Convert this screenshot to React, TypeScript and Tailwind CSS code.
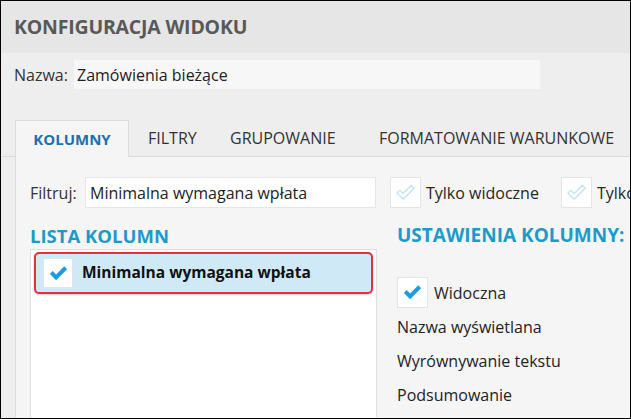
import React from "react";

const CHECK_POINTS = "3,12.5 6,9.5 9.5,13 18,4.5 21,7.5 9.5,19";

const CheckBox = ({ checked, className = "" }: { checked: boolean; className?: string }) => (
  <div
    className={
      "flex shrink-0 items-center justify-center border border-[#e4e4e4] bg-white " + className
    }
  >
    <svg viewBox="0 0 24 24" className="h-[23px] w-[23px]">
      {checked ? (
        <polygon points={CHECK_POINTS} fill="#1b9ce0" />
      ) : (
        <polygon
          points={CHECK_POINTS}
          fill="none"
          stroke="#bfe3f4"
          strokeWidth="1.3"
          strokeLinejoin="round"
        />
      )}
    </svg>
  </div>
);

export default function App() {
  return (
    <div
      className="flex h-[419px] w-[631px] flex-col overflow-hidden border border-black bg-[#eeeeee] text-[#262626]"
      style={{ fontFamily: '"Open Sans", "Noto Sans", sans-serif' }}
    >
      {/* header */}
      <div className="flex h-[52px] shrink-0 items-center bg-[#e6e6e6] px-[13px]">
        <h1 className="whitespace-nowrap text-[19.5px] font-bold tracking-[-0.2px] text-[#595959]">
          KONFIGURACJA WIDOKU
        </h1>
      </div>

      {/* name */}
      <div className="mt-[7px] flex h-[29px] shrink-0 items-center pl-[13px]">
        <span className="w-[60px] shrink-0 text-[16px] text-[#333]">Nazwa:</span>
        <div className="flex h-full w-[466px] shrink-0 items-center bg-[#f7f7f7] px-[3px] text-[16px] text-[#222]">
          Zamówienia bieżące
        </div>
      </div>

      {/* tabs */}
      <div className="mt-[31px] flex h-[37px] shrink-0 items-end whitespace-nowrap border-b border-[#d9d9d9] pl-[14px]">
        <div className="-mb-px flex h-[37px] w-[114px] shrink-0 items-center justify-center border border-b-0 border-[#dcdcdc] bg-[#f5f5f5] text-[15px] font-bold text-[#1b6fb3]">
          KOLUMNY
        </div>
        <div className="flex h-full items-center pl-[19px] text-[16px] text-[#333]">
          <span className="w-[82px] shrink-0">FILTRY</span>
          <span className="w-[149px] shrink-0">GRUPOWANIE</span>
          <span className="shrink-0">FORMATOWANIE WARUNKOWE</span>
        </div>
      </div>

      {/* content */}
      <div className="ml-[14px] flex min-h-0 flex-1 flex-col border-l border-[#dcdcdc] bg-[#f5f5f5] pl-[14px] pt-[20px]">
        <div className="flex h-[31px] shrink-0 items-center whitespace-nowrap">
          <span className="w-[55px] shrink-0 text-[16px] text-[#333]">Filtruj:</span>
          <div className="flex h-full w-[291px] shrink-0 items-center border border-[#e6e6e6] bg-white px-[4px] text-[16px] text-[#222]">
            Minimalna wymagana wpłata
          </div>
          <CheckBox checked={false} className="ml-[14px] h-[31px] w-[31px]" />
          <span className="ml-[5px] shrink-0 text-[16px]">Tylko widoczne</span>
          <CheckBox checked={false} className="ml-[22px] h-[31px] w-[31px]" />
          <span className="ml-[5px] shrink-0 text-[16px]">Tylko zaznaczone</span>
        </div>

        <div className="mt-[14px] flex min-h-0 flex-1">
          {/* list */}
          <div className="flex w-[347px] shrink-0 flex-col">
            <h2 className="h-[27px] whitespace-nowrap text-[18.5px] font-bold leading-[27px] text-[#1c9bc9]">
              LISTA KOLUMN
            </h2>
            <div className="flex-1 border border-b-0 border-[#e0e0e0] bg-white px-[3px] pt-[2px]">
              <div className="flex h-[42px] items-center rounded-[5px] border-2 border-[#e2323c] bg-[#cfe9f6] pl-[7px] shadow-[0_1px_2px_rgba(0,0,0,0.2)]">
                <CheckBox checked className="h-[30px] w-[30px]" />
                <span className="ml-[9px] whitespace-nowrap text-[15.5px] font-bold text-[#111]">
                  Minimalna wymagana wpłata
                </span>
              </div>
            </div>
          </div>

          {/* settings */}
          <div className="ml-[20px] flex shrink-0 flex-col whitespace-nowrap">
            <h2 className="h-[27px] text-[19px] font-bold leading-[27px] text-[#1c9bc9]">
              USTAWIENIA KOLUMNY: <span className="text-[#e2323c]">MINIMALNA</span>
            </h2>
            <div className="mt-[28px] flex items-center">
              <CheckBox checked className="h-[31px] w-[31px]" />
              <span className="ml-[6px] text-[16px]">Widoczna</span>
            </div>
            <div className="mt-[2px] flex flex-col text-[16px] leading-[34px] text-[#222]">
              <span>Nazwa wyświetlana</span>
              <span>Wyrównywanie tekstu</span>
              <span>Podsumowanie</span>
            </div>
          </div>
        </div>
      </div>
    </div>
  );
}
